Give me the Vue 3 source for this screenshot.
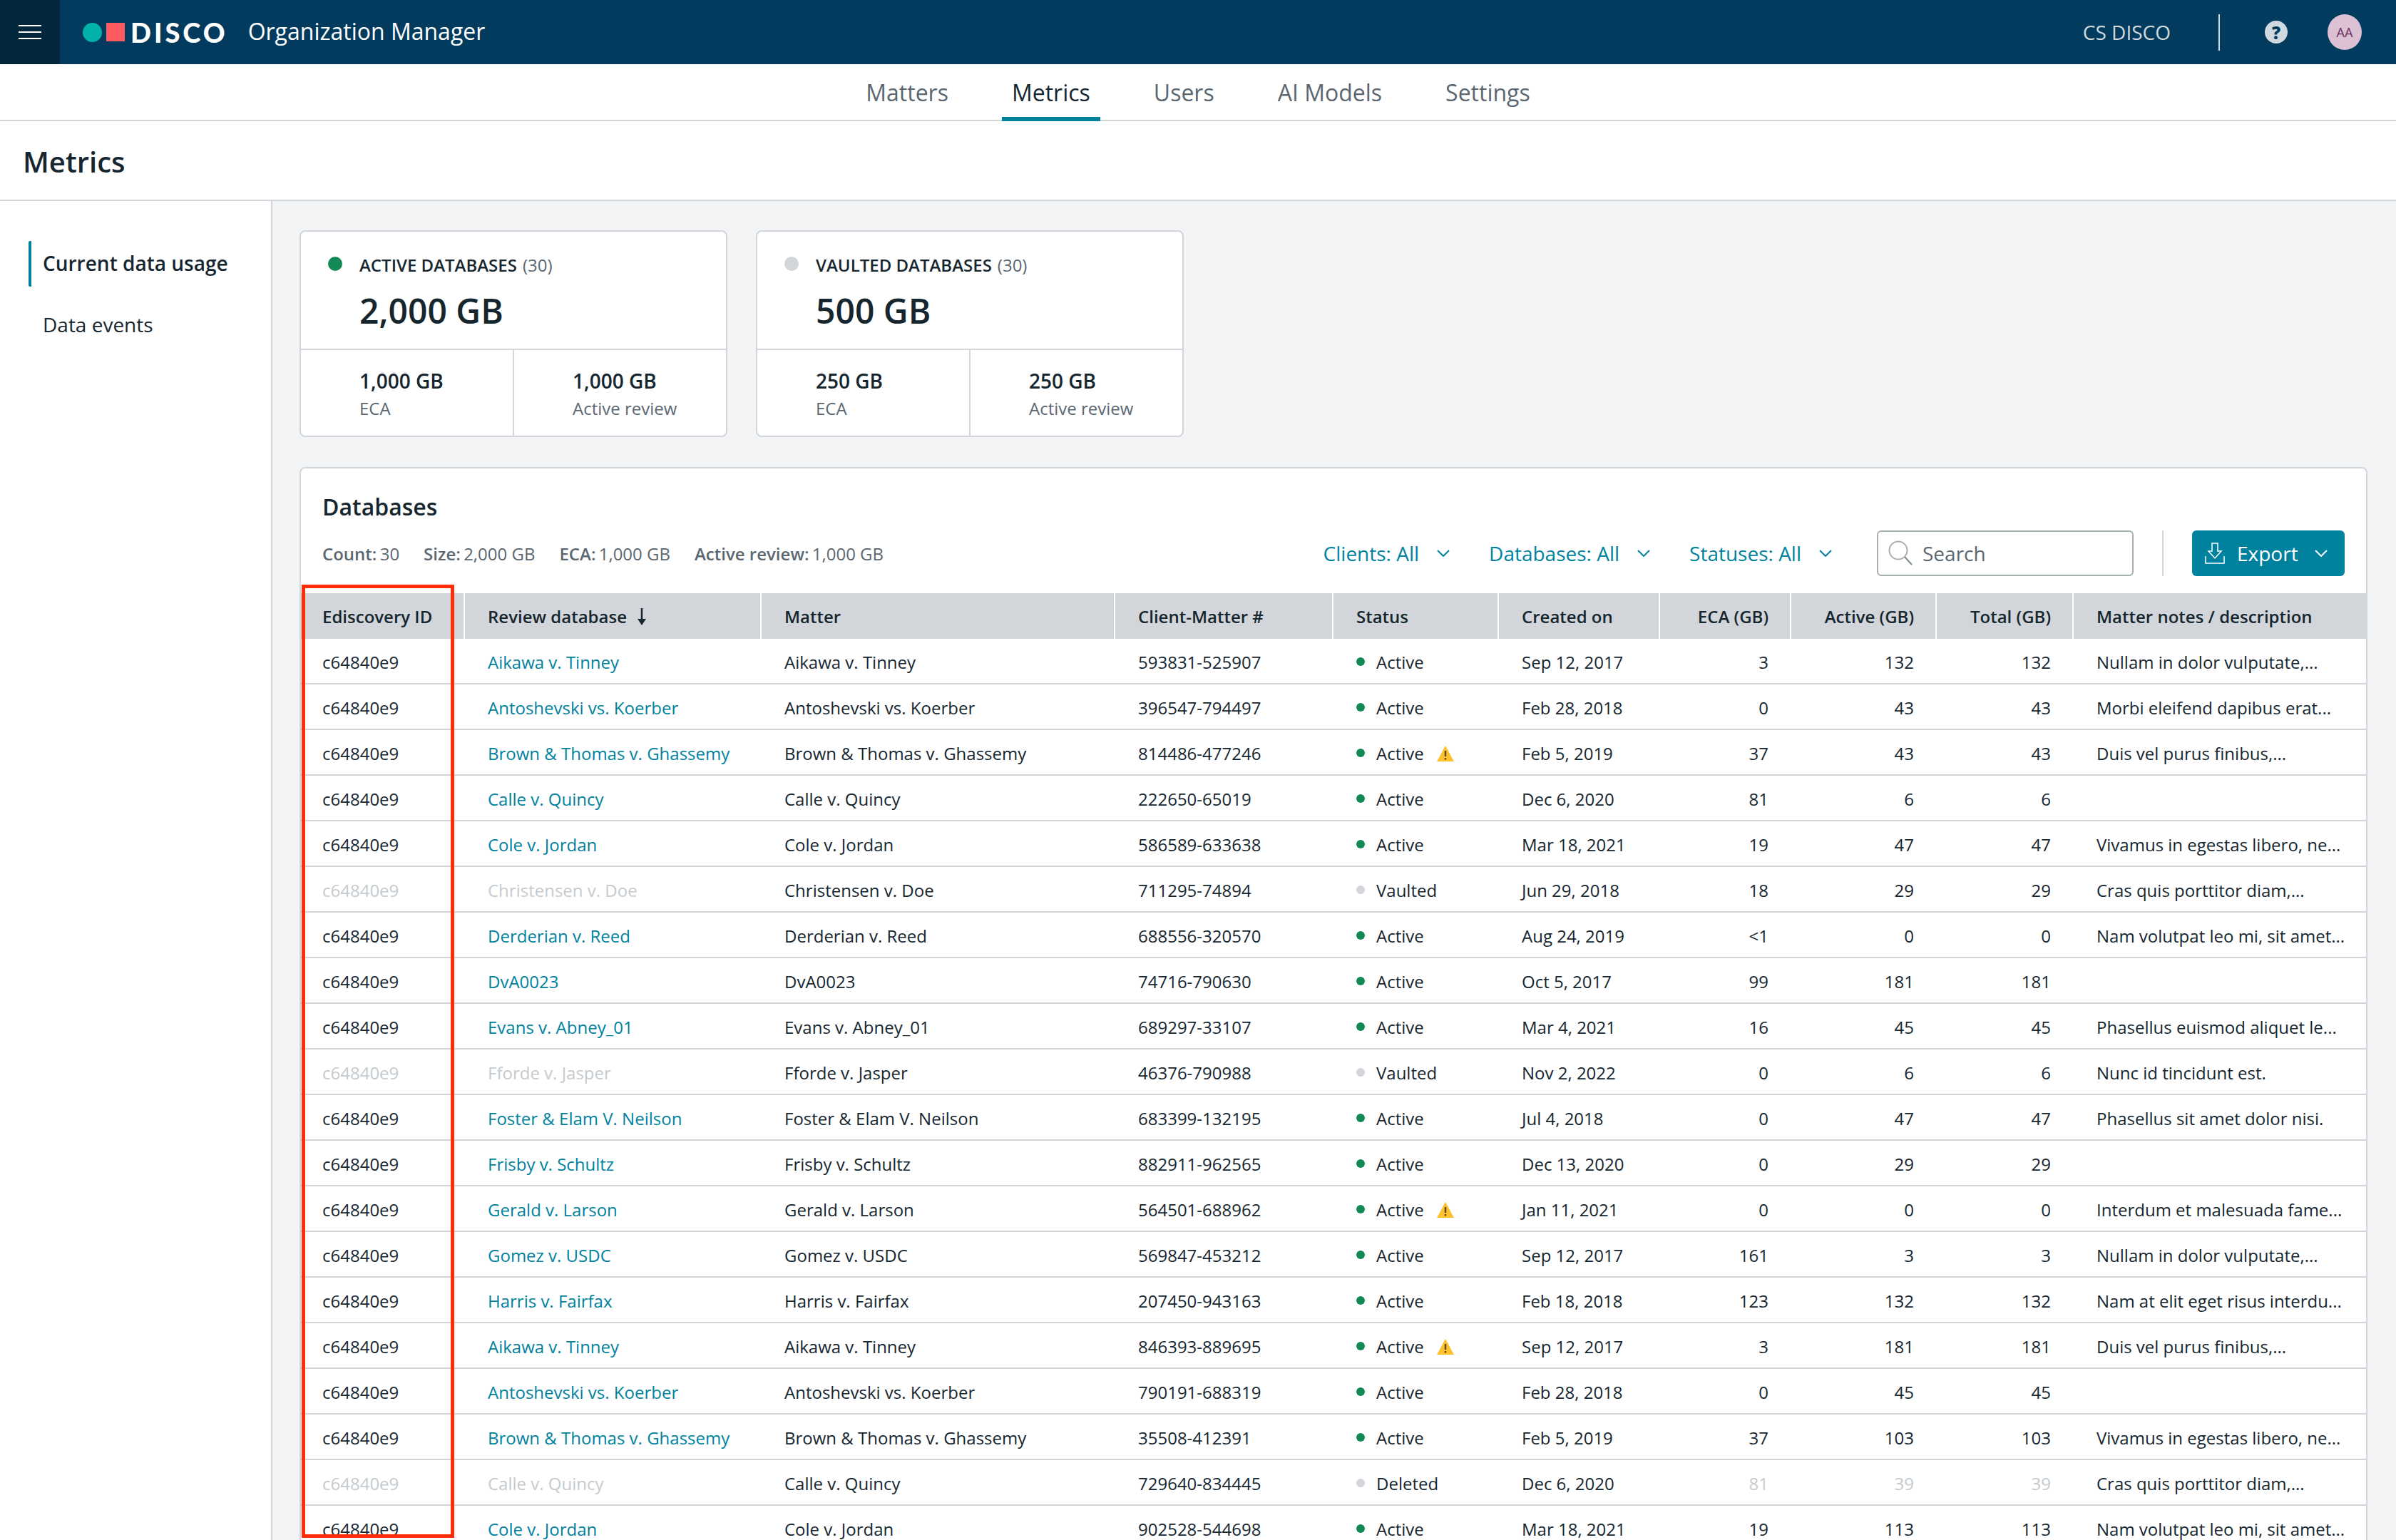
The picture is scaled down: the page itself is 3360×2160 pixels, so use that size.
<script setup>
const tabs = ['Matters', 'Metrics', 'Users', 'AI Models', 'Settings']

const columns = [
  { label: 'Ediscovery ID', width: 230 },
  { label: 'Review database', width: 416, sorted: true },
  { label: 'Matter', width: 496 },
  { label: 'Client-Matter #', width: 306 },
  { label: 'Status', width: 232 },
  { label: 'Created on', width: 226 },
  { label: 'ECA (GB)', width: 184, num: true },
  { label: 'Active (GB)', width: 204, num: true },
  { label: 'Total (GB)', width: 192, num: true },
  { label: 'Matter notes / description', width: 410 }
]

const cards = [
  { title: 'ACTIVE DATABASES', on: true, total: '2,000 GB', eca: '1,000 GB', review: '1,000 GB' },
  { title: 'VAULTED DATABASES', on: false, total: '500 GB', eca: '250 GB', review: '250 GB' }
]

const filters = ['Clients: All', 'Databases: All', 'Statuses: All']

const rows = [
  ['Aikawa v. Tinney', '593831-525907', 'Active', 'Sep 12, 2017', '3', '132', '132', 'Nullam in dolor vulputate,...'],
  ['Antoshevski vs. Koerber', '396547-794497', 'Active', 'Feb 28, 2018', '0', '43', '43', 'Morbi eleifend dapibus erat...'],
  ['Brown & Thomas v. Ghassemy', '814486-477246', 'Active', 'Feb 5, 2019', '37', '43', '43', 'Duis vel purus finibus,...', true],
  ['Calle v. Quincy', '222650-65019', 'Active', 'Dec 6, 2020', '81', '6', '6', ''],
  ['Cole v. Jordan', '586589-633638', 'Active', 'Mar 18, 2021', '19', '47', '47', 'Vivamus in egestas libero, ne...'],
  ['Christensen v. Doe', '711295-74894', 'Vaulted', 'Jun 29, 2018', '18', '29', '29', 'Cras quis porttitor diam,...'],
  ['Derderian v. Reed', '688556-320570', 'Active', 'Aug 24, 2019', '<1', '0', '0', 'Nam volutpat leo mi, sit amet...'],
  ['DvA0023', '74716-790630', 'Active', 'Oct 5, 2017', '99', '181', '181', ''],
  ['Evans v. Abney_01', '689297-33107', 'Active', 'Mar 4, 2021', '16', '45', '45', 'Phasellus euismod aliquet le...'],
  ['Fforde v. Jasper', '46376-790988', 'Vaulted', 'Nov 2, 2022', '0', '6', '6', 'Nunc id tincidunt est.'],
  ['Foster & Elam V. Neilson', '683399-132195', 'Active', 'Jul 4, 2018', '0', '47', '47', 'Phasellus sit amet dolor nisi.'],
  ['Frisby v. Schultz', '882911-962565', 'Active', 'Dec 13, 2020', '0', '29', '29', ''],
  ['Gerald v. Larson', '564501-688962', 'Active', 'Jan 11, 2021', '0', '0', '0', 'Interdum et malesuada fame...', true],
  ['Gomez v. USDC', '569847-453212', 'Active', 'Sep 12, 2017', '161', '3', '3', 'Nullam in dolor vulputate,...'],
  ['Harris v. Fairfax', '207450-943163', 'Active', 'Feb 18, 2018', '123', '132', '132', 'Nam at elit eget risus interdu...'],
  ['Aikawa v. Tinney', '846393-889695', 'Active', 'Sep 12, 2017', '3', '181', '181', 'Duis vel purus finibus,...', true],
  ['Antoshevski vs. Koerber', '790191-688319', 'Active', 'Feb 28, 2018', '0', '45', '45', ''],
  ['Brown & Thomas v. Ghassemy', '35508-412391', 'Active', 'Feb 5, 2019', '37', '103', '103', 'Vivamus in egestas libero, ne...'],
  ['Calle v. Quincy', '729640-834445', 'Deleted', 'Dec 6, 2020', '81', '39', '39', 'Cras quis porttitor diam,...'],
  ['Cole v. Jordan', '902528-544698', 'Active', 'Mar 18, 2021', '19', '113', '113', 'Nam volutpat leo mi, sit amet...']
].map(([name, client, status, created, eca, active, total, notes, warn]) => ({
  name, client, status, created, eca, active, total, notes, warn
}))
</script>

<template>
  <div class="page">
    <header class="topbar">
      <button class="menu" aria-label="Menu">
        <svg width="32" height="22" viewBox="0 0 32 22">
          <path d="M0 2h32M0 11h32M0 20h32" stroke="#fff" stroke-width="2" />
        </svg>
      </button>
      <div class="logo">
        <i class="logo-dot"></i>
        <i class="logo-square"></i>
        <span class="logo-word">DISCO</span>
      </div>
      <span class="app-name">Organization Manager</span>
      <div class="top-right">
        <span class="org">CS DISCO</span>
        <i class="top-divider"></i>
        <span class="help">?</span>
        <span class="avatar">AA</span>
      </div>
    </header>

    <nav class="tabs">
      <a v-for="t in tabs" :key="t" class="tab" :class="{ active: t === 'Metrics' }">{{ t }}</a>
    </nav>

    <div class="page-title"><h1>Metrics</h1></div>

    <div class="body">
      <aside class="sidebar">
        <a class="side-link current">Current data usage</a>
        <a class="side-link">Data events</a>
      </aside>

      <main class="main">
        <section class="cards">
          <article v-for="c in cards" :key="c.title" class="card">
            <div class="card-top">
              <div class="card-title">
                <i class="card-dot" :class="{ on: c.on }"></i>
                <span>{{ c.title }}</span>
                <em>(30)</em>
              </div>
              <div class="card-total">{{ c.total }}</div>
            </div>
            <div class="card-bottom">
              <div class="card-cell">
                <strong>{{ c.eca }}</strong>
                <span>ECA</span>
              </div>
              <div class="card-cell">
                <strong>{{ c.review }}</strong>
                <span>Active review</span>
              </div>
            </div>
          </article>
        </section>

        <section class="panel">
          <h2>Databases</h2>
          <div class="toolbar">
            <div class="stats">
              <span><b>Count:</b> 30</span>
              <span><b>Size:</b> 2,000 GB</span>
              <span><b>ECA:</b> 1,000 GB</span>
              <span><b>Active review:</b> 1,000 GB</span>
            </div>
            <div class="filters">
              <a v-for="f in filters" :key="f" class="filter">
                {{ f }}
                <svg width="18" height="10" viewBox="0 0 18 10">
                  <path d="M1 1l8 8 8-8" fill="none" stroke="currentColor" stroke-width="2" />
                </svg>
              </a>
            </div>
            <label class="search">
              <svg width="34" height="36" viewBox="0 0 34 36">
                <circle cx="14" cy="14" r="12.5" fill="none" stroke="#a6b0b3" stroke-width="2" />
                <path d="M23 23l10 11" stroke="#7f8b90" stroke-width="2" />
              </svg>
              <span>Search</span>
            </label>
            <i class="tool-divider"></i>
            <button class="export">
              <svg width="28" height="30" viewBox="0 0 28 30">
                <path d="M1 19v10h26v-10" fill="none" stroke="#fff" stroke-width="1.5" />
                <path d="M10 1h8v11h5l-9 10-9-10h5z" fill="none" stroke="#fff" stroke-width="1.5" />
              </svg>
              <span>Export</span>
              <svg width="18" height="10" viewBox="0 0 18 10">
                <path d="M1 1l8 8 8-8" fill="none" stroke="#fff" stroke-width="2" />
              </svg>
            </button>
          </div>

          <table class="grid">
            <colgroup>
              <col v-for="c in columns" :key="c.label" :style="{ width: c.width + 'px' }" />
            </colgroup>
            <thead>
              <tr>
                <th v-for="c in columns" :key="c.label" :class="{ num: c.num }">
                  {{ c.label }}
                  <svg v-if="c.sorted" class="sort" width="14" height="24" viewBox="0 0 14 24">
                    <path d="M7 0v21" stroke="#16262f" stroke-width="2.5" />
                    <path d="M1 15l6 9 6-9z" fill="#16262f" />
                  </svg>
                </th>
              </tr>
            </thead>
            <tbody>
              <tr v-for="(r, i) in rows" :key="i">
                <td :class="{ faded: r.status !== 'Active' }">c64840e9</td>
                <td :class="r.status === 'Active' ? 'link' : 'faded'">{{ r.name }}</td>
                <td>{{ r.name }}</td>
                <td>{{ r.client }}</td>
                <td>
                  <i class="status-dot" :class="{ on: r.status === 'Active' }"></i>{{ r.status }}
                  <svg v-if="r.warn" class="warn" width="24" height="22" viewBox="0 0 24 22">
                    <path d="M12 0l12 22H0z" fill="#ffc02e" />
                    <path d="M12 7v8M12 17v2.5" stroke="#5f4a12" stroke-width="2.4" />
                  </svg>
                </td>
                <td>{{ r.created }}</td>
                <td class="num" :class="{ faded: r.status === 'Deleted' }">{{ r.eca }}</td>
                <td class="num" :class="{ faded: r.status === 'Deleted' }">{{ r.active }}</td>
                <td class="num" :class="{ faded: r.status === 'Deleted' }">{{ r.total }}</td>
                <td>{{ r.notes }}</td>
              </tr>
            </tbody>
          </table>
        </section>
      </main>
    </div>

    <div class="annotation"></div>
  </div>
</template>

<style scoped>
.page {
  position: relative;
  height: 2160px;
  overflow: hidden;
  background: #fff;
  color: #16262f;
  font-family: "Open Sans", "Liberation Sans", sans-serif;
  font-size: 24px;
}

.topbar {
  display: flex;
  align-items: center;
  height: 90px;
  background: #033b5e;
  color: #fff;
}

.menu {
  display: flex;
  align-items: center;
  justify-content: center;
  width: 84px;
  height: 90px;
  border: none;
  background: #02263b;
}

.logo {
  display: flex;
  align-items: center;
  margin-left: 32px;
}

.logo-dot {
  width: 27px;
  height: 27px;
  border-radius: 50%;
  background: #00b2a9;
}

.logo-square {
  width: 26px;
  height: 26px;
  margin-left: 6px;
  background: #ff5a5f;
}

.logo-word {
  margin-left: 8px;
  font-family: Lato, sans-serif;
  font-size: 38px;
  font-weight: 900;
  line-height: 1;
  letter-spacing: 4px;
}

.app-name {
  margin: 0 0 4px 28px;
  font-size: 32px;
}

.top-right {
  display: flex;
  align-items: center;
  margin-left: auto;
  padding-right: 48px;
}

.org {
  color: #cfd9df;
  font-size: 28px;
}

.top-divider {
  width: 2px;
  height: 51px;
  margin: 0 63px 0 67px;
  background: #cfd9df;
}

.help {
  display: flex;
  align-items: center;
  justify-content: center;
  width: 32px;
  height: 32px;
  border-radius: 50%;
  background: #cfd9df;
  color: #033b5e;
  font-size: 24px;
  font-weight: 800;
}

.avatar {
  display: flex;
  align-items: center;
  justify-content: center;
  width: 48px;
  height: 50px;
  margin-left: 56px;
  border-radius: 50%;
  background: #dcc0d4;
  color: #6b2d5c;
  font-size: 18px;
}

.tabs {
  display: flex;
  justify-content: center;
  gap: 61px;
  height: 80px;
  box-sizing: border-box;
  border-bottom: 2px solid #d2d6da;
}

.tab {
  height: 80px;
  padding: 0 14px;
  box-sizing: border-box;
  color: #5b6770;
  font-size: 32px;
  line-height: 80px;
}

.tab.active {
  border-bottom: 6px solid #00829f;
  color: #16262f;
}

.page-title {
  display: flex;
  align-items: center;
  height: 112px;
  padding: 2px 0 0 32px;
  box-sizing: border-box;
  border-bottom: 2px solid #d2d6da;
}

h1 {
  margin: 0;
  font-size: 40px;
  font-weight: 600;
}

.body {
  display: flex;
  height: 1878px;
}

.sidebar {
  display: flex;
  flex-direction: column;
  width: 382px;
  flex: none;
  padding-top: 56px;
  box-sizing: border-box;
  border-right: 2px solid #d2d6da;
}

.side-link {
  height: 64px;
  margin-left: 40px;
  padding-left: 20px;
  font-size: 28px;
  line-height: 62px;
}

.side-link.current {
  border-left: 4px solid #00829f;
  border-radius: 2px;
  padding-left: 16px;
  margin-bottom: 22px;
  font-weight: 600;
}

.main {
  flex: 1;
  padding: 41px 40px 0 38px;
  background: #f3f4f6;
}

.cards {
  display: flex;
  gap: 40px;
  margin-bottom: 42px;
}

.card {
  width: 600px;
  height: 290px;
  box-sizing: border-box;
  border: 2px solid #d2d6da;
  border-radius: 8px;
  background: #fff;
}

.card-top {
  height: 166px;
  padding-left: 82px;
  box-sizing: border-box;
  border-bottom: 2px solid #d2d6da;
}

.card-title {
  position: relative;
  padding-top: 30px;
  font-weight: 600;
  line-height: 34px;
}

.card-title em {
  margin-left: 8px;
  color: #5b6770;
  font-style: normal;
  font-weight: 400;
}

.card-dot {
  position: absolute;
  left: -44px;
  top: 35px;
  width: 20px;
  height: 20px;
  border-radius: 50%;
  background: #d2d6da;
}

.card-dot.on {
  background: #138a55;
}

.card-total {
  margin-top: 17px;
  font-size: 48px;
  font-weight: 600;
  line-height: 60px;
}

.card-bottom {
  display: flex;
  height: 120px;
}

.card-cell {
  display: flex;
  flex-direction: column;
  flex: 1;
  padding: 24px 0 0 82px;
  box-sizing: border-box;
}

.card-cell + .card-cell {
  border-left: 2px solid #d2d6da;
}

.card-cell strong {
  font-size: 28px;
  font-weight: 600;
  line-height: 38px;
}

.card-cell span {
  margin-top: 2px;
  color: #5b6770;
  line-height: 36px;
}

.panel {
  height: 1600px;
  border: 2px solid #d2d6da;
  border-radius: 8px 8px 0 0;
  background: #fff;
}

h2 {
  margin: 0;
  padding: 32px 0 0 30px;
  font-size: 32px;
  font-weight: 600;
  line-height: 44px;
}

.toolbar {
  display: flex;
  align-items: center;
  height: 64px;
  margin: 11px 30px 24px 30px;
}

.stats {
  display: flex;
  gap: 34px;
  color: #5b6770;
}

.stats b {
  margin-right: -2px;
  font-weight: 600;
}

.filters {
  display: flex;
  gap: 55px;
  margin-left: auto;
  margin-right: 63px;
}

.filter {
  display: flex;
  align-items: center;
  gap: 25px;
  color: #00829f;
  font-size: 28px;
}

.search {
  display: flex;
  align-items: center;
  gap: 14px;
  width: 360px;
  height: 64px;
  padding-left: 14px;
  box-sizing: border-box;
  border: 2px solid #a6b0b3;
  border-radius: 6px;
  color: #5b6770;
  font-size: 28px;
}

.tool-divider {
  width: 2px;
  height: 64px;
  margin: 0 40px;
  background: #d2d6da;
}

.export {
  display: flex;
  align-items: center;
  width: 214px;
  height: 64px;
  padding: 0 24px 0 18px;
  box-sizing: border-box;
  border: none;
  border-radius: 6px;
  background: #00829f;
  color: #fff;
  font: inherit;
  font-size: 28px;
}

.export span {
  margin: 0 auto 0 17px;
}

.grid {
  width: 2896px;
  border-collapse: separate;
  border-spacing: 0;
  table-layout: fixed;
}

th {
  height: 64px;
  padding: 0 32px;
  box-sizing: border-box;
  border-right: 2px solid #fff;
  background: #d2d6da;
  font-weight: 600;
  text-align: left;
  white-space: nowrap;
}

th.num {
  padding-right: 30px;
  text-align: right;
}

th:first-child,
td:first-child {
  padding-left: 30px;
}

th:last-child {
  border-right: none;
}

td {
  height: 64px;
  padding: 2px 0 0 32px;
  box-sizing: border-box;
  border-bottom: 2px solid #d2d6da;
  white-space: nowrap;
  overflow: hidden;
}

td.num {
  padding: 2px 32px 0 0;
  text-align: right;
}

.link {
  color: #00829f;
}

.faded {
  color: #c5cbcf;
}

.sort {
  margin-left: 8px;
  vertical-align: -3px;
}

.status-dot {
  display: inline-block;
  width: 12px;
  height: 12px;
  margin-right: 16px;
  border-radius: 50%;
  background: #d2d6da;
  vertical-align: 4px;
}

.status-dot.on {
  background: #138a55;
}

.warn {
  margin-left: 12px;
  vertical-align: -2px;
}

.annotation {
  position: absolute;
  left: 423px;
  top: 820px;
  width: 214px;
  height: 1337px;
  box-sizing: border-box;
  border: 5px solid #ff2d0a;
}
</style>
